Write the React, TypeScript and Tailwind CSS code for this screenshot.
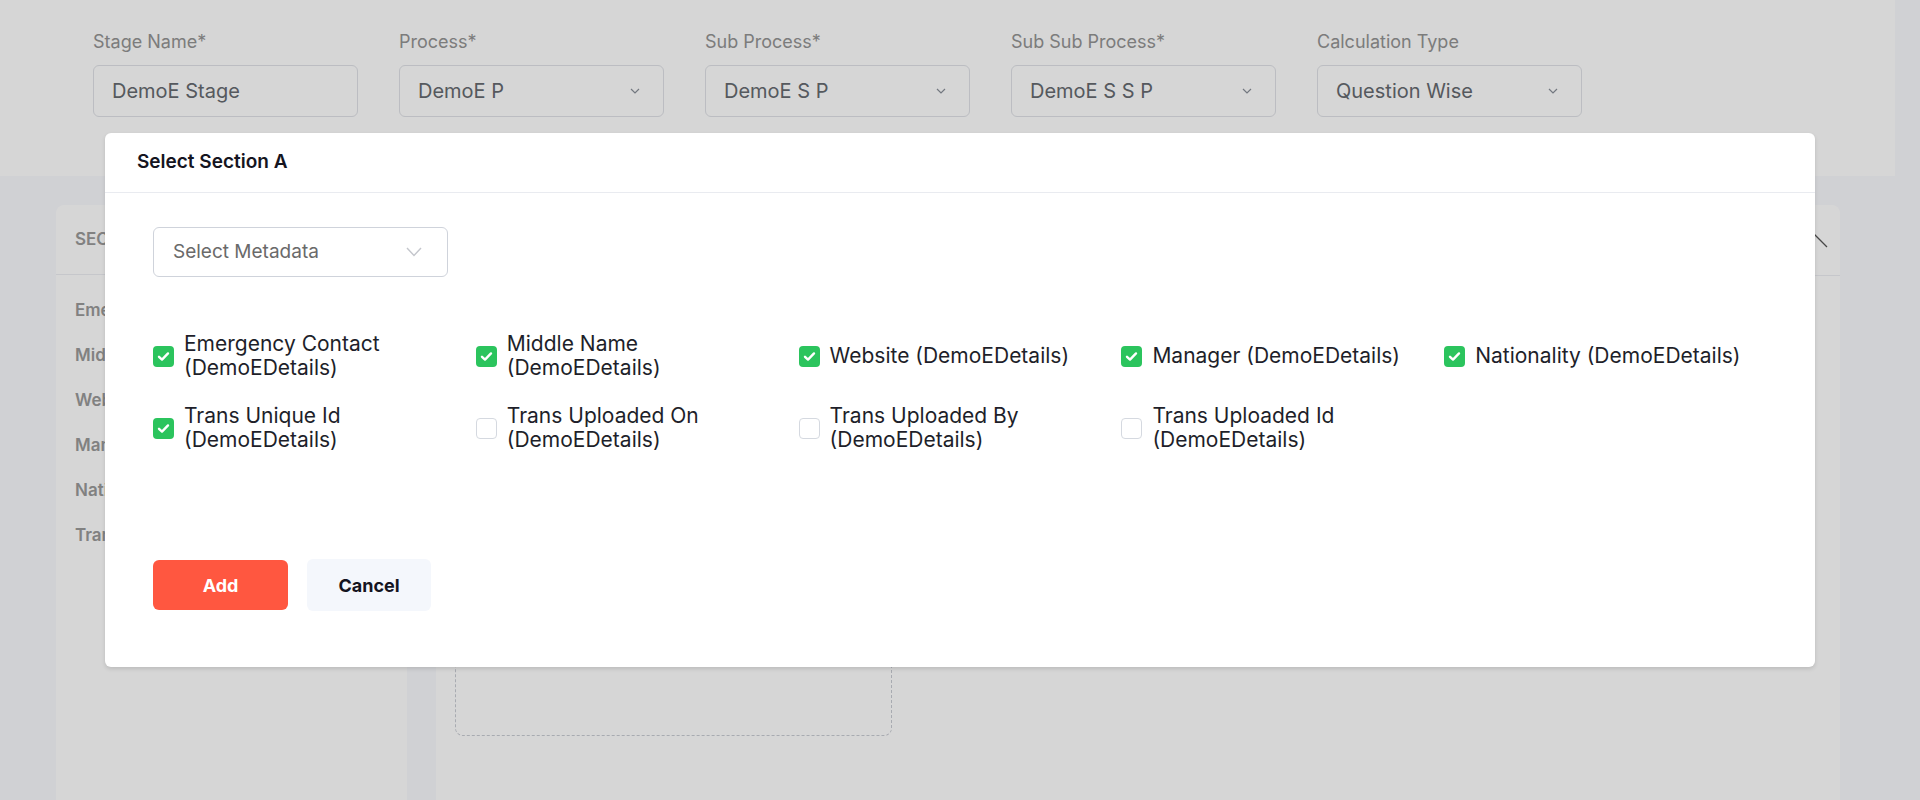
import React from "react";

const fields = [
  { label: "Stage Name*", value: "DemoE Stage", select: false },
  { label: "Process*", value: "DemoE P", select: true },
  { label: "Sub Process*", value: "DemoE S P", select: true },
  { label: "Sub Sub Process*", value: "DemoE S S P", select: true },
  { label: "Calculation Type", value: "Question Wise", select: true },
];

const sideItems = [
  "Emergency Contact",
  "Middle Name",
  "Website",
  "Manager",
  "Nationality",
  "Trans Unique Id",
];

const options = [
  { text: "Emergency Contact (DemoEDetails)", checked: true },
  { text: "Middle Name (DemoEDetails)", checked: true },
  { text: "Website (DemoEDetails)", checked: true },
  { text: "Manager (DemoEDetails)", checked: true },
  { text: "Nationality (DemoEDetails)", checked: true },
  { text: "Trans Unique Id (DemoEDetails)", checked: true },
  { text: "Trans Uploaded On (DemoEDetails)", checked: false },
  { text: "Trans Uploaded By (DemoEDetails)", checked: false },
  { text: "Trans Uploaded Id (DemoEDetails)", checked: false },
];

function SmallChevron() {
  return (
    <svg width="10" height="6" viewBox="0 0 10 6" fill="none">
      <polyline points="1,1 5,5 9,1" stroke="#8a8f99" strokeWidth="1.2" />
    </svg>
  );
}

function Checkbox({ checked }: { checked: boolean }) {
  if (checked) {
    return (
      <div className="w-[21px] h-[21px] shrink-0 rounded-[4px] bg-[#2bc45d] flex items-center justify-center">
        <svg width="13" height="11" viewBox="0 0 13 11" fill="none">
          <polyline
            points="2,5.8 5,8.6 11,2.4"
            stroke="white"
            strokeWidth="2.4"
            strokeLinecap="round"
            strokeLinejoin="round"
          />
        </svg>
      </div>
    );
  }
  return (
    <div className="w-[21px] h-[21px] shrink-0 rounded-[4px] bg-white border border-[#d5d9e0]" />
  );
}

export default function App() {
  return (
    <div className="relative w-[1920px] h-[800px] overflow-hidden bg-[#f8f9fd] font-['Inter',sans-serif]">
      {/* Top form panel */}
      <div className="w-[1895px] h-[176px] bg-white flex gap-[41px] pl-[93px] pt-[30px]">
        {fields.map((f) => (
          <div key={f.label} className="w-[265px] flex flex-col">
            <div className="text-[18px] leading-6 text-[#949494] mb-[11px]">{f.label}</div>
            <div className="h-[52px] rounded-md border border-[#e0e2e7] flex items-center justify-between pl-[18px] pr-[23px]">
              <span className="text-[20px] text-[#666a70]">{f.value}</span>
              {f.select && <SmallChevron />}
            </div>
          </div>
        ))}
      </div>

      {/* Lower area */}
      <div className="flex pl-[56px] pt-[29px] gap-[29px]">
        <div className="w-[351px] h-[600px] bg-white rounded-t-lg">
          <div className="h-[70px] border-b border-[#eceef2] flex items-center px-[19px]">
            <span className="text-[17px] font-semibold text-[#9a9a9a] uppercase">Sections</span>
          </div>
          <div className="pt-[13px] px-[19px]">
            {sideItems.map((s) => (
              <div key={s} className="h-[45px] flex items-center text-[17px] font-semibold text-[#9a9a9a]">
                {s}
              </div>
            ))}
          </div>
        </div>
        <div className="w-[1404px] h-[600px] bg-white rounded-t-lg">
          <div className="h-[71px] border-b border-[#eceef2] flex items-center justify-end pr-[12px]">
            <svg width="28" height="15" viewBox="0 0 28 15" fill="none">
              <polyline points="1,14 14,1 27,14" stroke="#555" strokeWidth="1.3" />
            </svg>
          </div>
          <div className="px-[19px] pt-[260px]">
            <div className="w-[437px] h-[200px] rounded-lg border border-dashed border-[#c9ccd3]" />
          </div>
        </div>
      </div>

      {/* Overlay */}
      <div className="absolute inset-0 bg-[rgba(0,0,0,0.16)]" />

      {/* Modal */}
      <div className="absolute left-[105px] top-[133px] w-[1710px] bg-white rounded-md shadow-[0_2px_4px_rgba(0,0,0,0.12)]">
        <div className="h-[60px] border-b border-[#e9ebf0] flex items-center px-8">
          <span className="text-[19px] font-semibold text-[#15151f]">Select Section A</span>
        </div>
        <div className="px-12 pt-[34px] pb-[56px]">
          <div className="w-[295px] h-[50px] rounded-md border border-[#cfd3db] flex items-center justify-between pl-[19px] pr-[25px]">
            <span className="text-[19px] text-[#6a6a6a]">Select Metadata</span>
            <svg width="16" height="10" viewBox="0 0 16 10" fill="none">
              <polyline points="1,1 8,8.5 15,1" stroke="#c4c6cc" strokeWidth="1.4" />
            </svg>
          </div>

          <div className="mt-[55px] grid grid-cols-5 items-center gap-y-[24px]">
            {options.map((o) => (
              <div key={o.text} className="flex items-center gap-[10px] pr-6">
                <Checkbox checked={o.checked} />
                <span className="text-[21px] leading-[24px] text-[#1e1f2a]">{o.text}</span>
              </div>
            ))}
          </div>

          <div className="mt-[107px] flex items-center gap-[19px]">
            <button className="w-[135px] h-[50px] rounded-md bg-[#ff5740] text-white text-[18px] font-bold">
              Add
            </button>
            <button className="w-[124px] h-[52px] rounded-md bg-[#f4f7fc] text-[#14141f] text-[18px] font-bold">
              Cancel
            </button>
          </div>
        </div>
      </div>
    </div>
  );
}
